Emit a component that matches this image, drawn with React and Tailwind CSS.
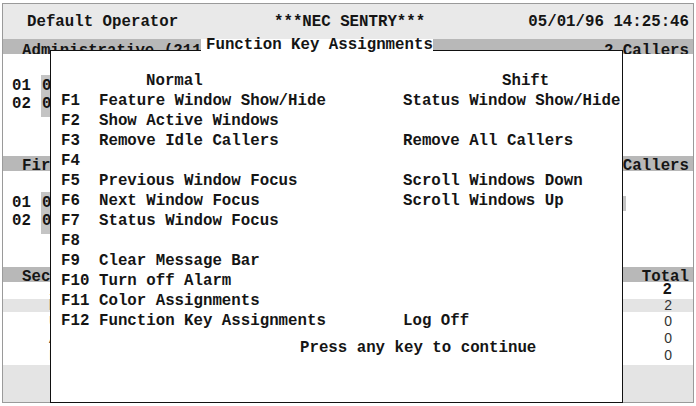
import React from 'react';

const mono = "font-['Liberation_Mono','Courier_New',monospace]";
const sans = "font-['Liberation_Sans',Arial,sans-serif] font-normal text-[14px] text-[#333]";

const keyRows = [
  ['F1', 'Feature Window Show/Hide', 'Status Window Show/Hide'],
  ['F2', 'Show Active Windows', ''],
  ['F3', 'Remove Idle Callers', 'Remove All Callers'],
  ['F4', '', ''],
  ['F5', 'Previous Window Focus', 'Scroll Windows Down'],
  ['F6', 'Next Window Focus', 'Scroll Windows Up'],
  ['F7', 'Status Window Focus', ''],
  ['F8', '', ''],
  ['F9', 'Clear Message Bar', ''],
  ['F10', 'Turn off Alarm', ''],
  ['F11', 'Color Assignments', ''],
  ['F12', 'Function Key Assignments', 'Log Off'],
];

const SectionBar = ({ left, right, low }) => (
  <div className={`h-[15px] bg-[#b8b8b8] flex items-start pl-[19px] pr-[4px] leading-[14px] overflow-hidden whitespace-nowrap ${low ? 'pt-[5px]' : 'pt-[3px]'}`}>
    <span>{left}</span>
    <span className="ml-auto">{right}</span>
  </div>
);

const LineRow = ({ num, mark, hilite }) => (
  <div className="h-[18px] flex items-center pl-[9px] relative">
    <span>{num}</span>
    <span className="ml-[10px] bg-[#c4c4c4] px-[1px] w-[10px]">{mark}</span>
    {hilite && <span className="absolute right-[67px] top-[1px] h-[15px] w-[40px] bg-[#c4c4c4]" />}
  </div>
);

const TotalRow = ({ h, stub, value, shade, bold }) => (
  <div className={`${h} flex items-center justify-between pl-[46px] pr-[21px] ${shade ? 'bg-[#e4e4e4]' : ''}`}>
    <span className={sans}>{stub}</span>
    <span className={bold ? '' : sans}>{value}</span>
  </div>
);

const FunctionKeyDialog = () => (
  <div className={`absolute left-[50px] top-[50px] w-[573px] h-[353px] bg-white border border-[#111] ${mono} font-bold text-[15.75px] leading-[20px] text-[#151515]`}>
    <div className="absolute left-[150px] -top-[12px] h-[13px] w-[232px] bg-white flex items-center pl-[5px] leading-[13px] whitespace-nowrap">
      Function Key Assignments
    </div>
    <div className="pt-[20px] pl-[10px]">
      <div className="grid grid-cols-[38px_305px_1fr] whitespace-nowrap">
        <span />
        <span className="pl-[47px]">Normal</span>
        <span className="pl-[98px]">Shift</span>
        {keyRows.map(([key, normal, shift]) => (
          <React.Fragment key={key}>
            <span>{key}</span>
            <span>{normal}</span>
            <span className="-ml-[1px]">{shift}</span>
          </React.Fragment>
        ))}
      </div>
    </div>
    <div className="mt-[7px] pl-[249px] whitespace-nowrap">Press any key to continue</div>
  </div>
);

export default function App() {
  return (
    <div className="w-[696px] h-[406px] bg-white relative overflow-hidden">
      <div className={`ml-[2px] mt-[3px] w-[692px] h-[400px] border border-[#9a9a9a] flex flex-col ${mono} font-bold text-[15.75px] text-[#151515]`}>
        {/* title line */}
        <div className="h-[35px] bg-[#e9e9e9] flex items-center pt-[3px] pl-[24px] pr-[4px] whitespace-nowrap">
          <span className="w-[247px]">Default Operator</span>
          <span>***NEC SENTRY***</span>
          <span className="ml-auto">05/01/96 14:25:46</span>
        </div>

        <SectionBar left="Administrative (211" right="2 Callers" low />
        <div className="h-[102px] pt-[24px]">
          <LineRow num="01" mark="0" />
          <LineRow num="02" mark="0" />
        </div>

        <SectionBar left="First Shift (212)" right="Callers" />
        <div className="h-[96px] pt-[24px]">
          <LineRow num="01" mark="0" hilite />
          <LineRow num="02" mark="0" />
        </div>

        <SectionBar left="Secondary" right="Total" />
        <div className="flex-1 flex flex-col">
          <TotalRow h="h-[17px]" stub="1" value="2" bold />
          <TotalRow h="h-[13px]" stub="l" value="2" shade />
          <TotalRow h="h-[18px]" stub="U" value="0" />
          <TotalRow h="h-[16px]" stub="A" value="0" />
          <TotalRow h="h-[18px]" stub="I" value="0" />
          <div className="mt-[1px] flex-1 bg-[#e4e4e4]" />
        </div>
      </div>

      <FunctionKeyDialog />
    </div>
  );
}
